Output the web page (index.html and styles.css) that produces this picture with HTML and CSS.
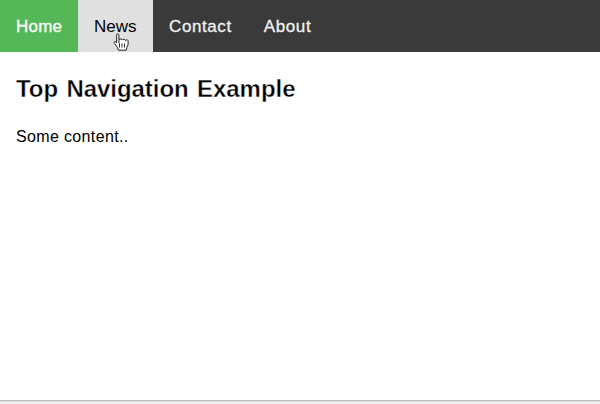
FILE: index.html
```html
<!DOCTYPE html>
<html lang="en">
<head>
<meta charset="utf-8">
<title>Top Navigation Example</title>
<link rel="stylesheet" href="styles.css">
</head>
<body>
<div class="page">
  <nav class="topnav">
    <a class="active" href="#home">Home</a>
    <a class="hover" href="#news">News
      <svg class="cursor" viewBox="0 0 16 18" width="16" height="18" aria-hidden="true">
        <path d="M5.2 10.2V2.2C5.2.4 2.9.4 2.9 2.2V9.8L2 8.9C.9 8-.2 9.1.7 10.3L3.6 14.2 4.7 17.2H12.5L13.1 14.5 14.4 11.6V8C14.4 6.5 12.1 6.3 11.9 7.6 11.7 6.1 9.4 5.8 9 7.1 8.6 5.7 6 5.6 5.2 6.8" transform="translate(.7 0)"/>
        <path d="M6.5 10.5v4M9 10.5v4M11.5 10.5v4"/>
      </svg>
    </a>
    <a class="wide" href="#contact">Contact</a>
    <a class="wide" href="#about">About</a>
  </nav>
  <main class="content">
    <h2>Top Navigation Example</h2>
    <p>Some content..</p>
  </main>
</div>
</body>
</html>
```
FILE: styles.css
```css
body {
  margin: 0;
  height: 404px;
  overflow: hidden;
  background: #fff;
  color: #000;
  font-family: "Liberation Sans", Arial, sans-serif;
}

.page {
  box-sizing: border-box;
  height: 401px;
  border-bottom: 1px solid #bdbdbd;
  box-shadow: 0 1px #dedede, 0 3px #f0f0f0;
}

.topnav {
  display: flex;
  height: 52px;
  background: #3a3a3a;
}

.topnav a {
  position: relative;
  box-sizing: border-box;
  padding: 17px 16px 15px;
  color: #f2f2f2;
  font-size: 17px;
  line-height: 20px;
  letter-spacing: 0.2px;
  text-decoration: none;
  -webkit-text-stroke: 0.3px currentColor;
}

.topnav .active {
  width: 78px;
  background: #55b858;
  color: #fff;
}

.topnav .hover {
  width: 75px;
  background: #e0e0e0;
  color: #000;
  letter-spacing: 0;
  -webkit-text-stroke: 0;
}

.topnav .wide {
  letter-spacing: 0.6px;
}

.cursor {
  position: absolute;
  left: 35px;
  top: 33px;
  fill: #fff;
  stroke: #222;
  stroke-width: 1;
  stroke-linejoin: round;
}

.content {
  padding: 0 16px;
}

h2 {
  margin: 23px 0 0;
  font-size: 24px;
  line-height: 28px;
  letter-spacing: -0.05px;
  word-spacing: 1.8px;
  -webkit-text-stroke: 0.4px #fff;
}

p {
  margin: 25px 0 0;
  font-size: 16px;
  line-height: 18px;
  letter-spacing: 0.35px;
}
```
